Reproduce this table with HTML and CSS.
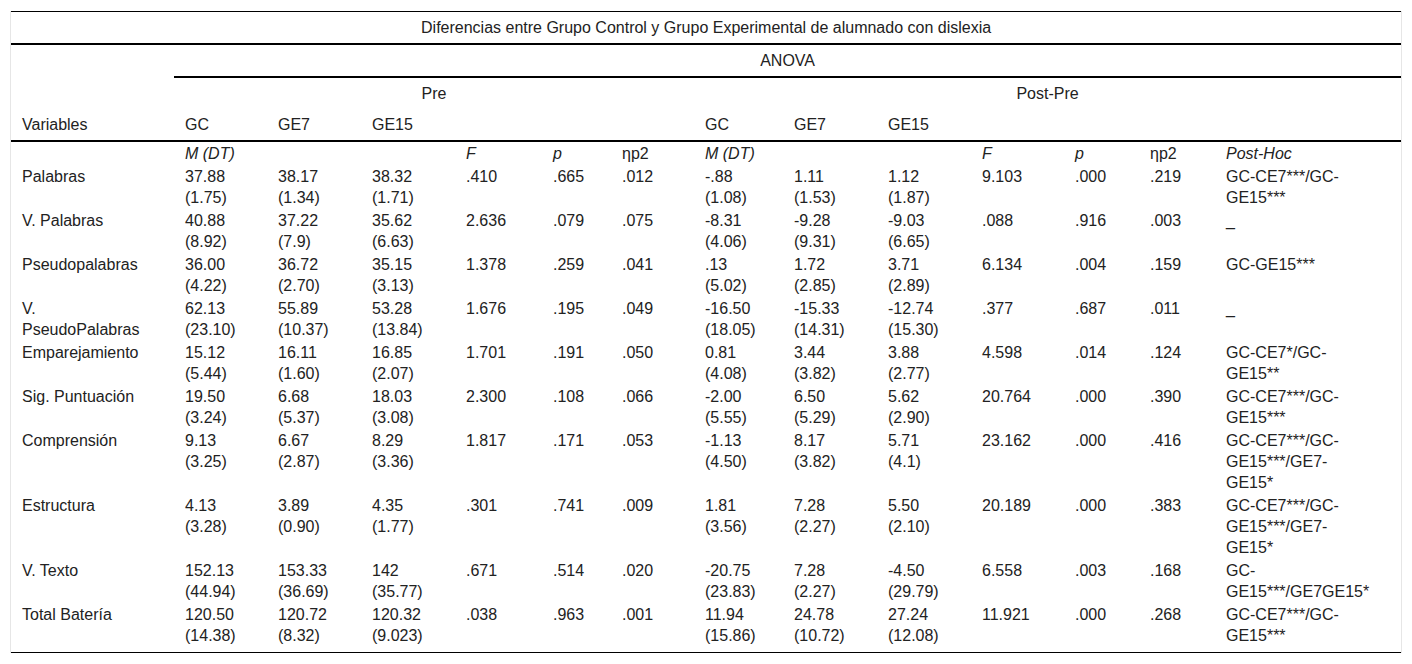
FILE: index.html
```html
<!DOCTYPE html>
<html lang="es">
<head>
<meta charset="utf-8">
<title>Diferencias entre Grupo Control y Grupo Experimental</title>
<link rel="stylesheet" href="styles.css">
</head>
<body>
<div class="frame">
<table class="data">
<colgroup>
<col class="w-var"><col class="w-93"><col class="w-94"><col class="w-94"><col class="w-87"><col class="w-69"><col class="w-83">
<col class="w-89"><col class="w-94"><col class="w-94"><col class="w-93"><col class="w-75"><col class="w-76"><col class="w-ph">
</colgroup>
<thead>
<tr><th class="title" colspan="14">Diferencias entre Grupo Control y Grupo Experimental de alumnado con dislexia</th></tr>
<tr><th class="hd"></th><th class="hd anova" colspan="13">ANOVA</th></tr>
<tr><th class="hd"></th><th class="hd center" colspan="6">Pre</th><th class="hd center" colspan="7">Post-Pre</th></tr>
<tr class="sub">
<th class="hd">Variables</th><th class="hd">GC</th><th class="hd">GE7</th><th class="hd">GE15</th><th class="hd"></th><th class="hd"></th><th class="hd"></th>
<th class="hd">GC</th><th class="hd">GE7</th><th class="hd">GE15</th><th class="hd"></th><th class="hd"></th><th class="hd"></th><th class="hd"></th>
</tr>
</thead>
<tbody>
<tr><td></td><td class="it">M (DT)</td><td></td><td></td><td class="it">F</td><td class="it">p</td><td>ηp2</td><td class="it">M (DT)</td><td></td><td></td><td class="it">F</td><td class="it">p</td><td>ηp2</td><td class="it">Post-Hoc</td></tr>
<tr><td>Palabras</td><td>37.88<br>(1.75)</td><td>38.17<br>(1.34)</td><td>38.32<br>(1.71)</td><td>.410</td><td>.665</td><td>.012</td><td>-.88<br>(1.08)</td><td>1.11<br>(1.53)</td><td>1.12<br>(1.87)</td><td>9.103</td><td>.000</td><td>.219</td><td>GC-CE7***/GC-<br>GE15***</td></tr>
<tr><td>V. Palabras</td><td>40.88<br>(8.92)</td><td>37.22<br>(7.9)</td><td>35.62<br>(6.63)</td><td>2.636</td><td>.079</td><td>.075</td><td>-8.31<br>(4.06)</td><td>-9.28<br>(9.31)</td><td>-9.03<br>(6.65)</td><td>.088</td><td>.916</td><td>.003</td><td>_</td></tr>
<tr><td>Pseudopalabras</td><td>36.00<br>(4.22)</td><td>36.72<br>(2.70)</td><td>35.15<br>(3.13)</td><td>1.378</td><td>.259</td><td>.041</td><td>.13<br>(5.02)</td><td>1.72<br>(2.85)</td><td>3.71<br>(2.89)</td><td>6.134</td><td>.004</td><td>.159</td><td>GC-GE15***</td></tr>
<tr><td>V.<br>PseudoPalabras</td><td>62.13<br>(23.10)</td><td>55.89<br>(10.37)</td><td>53.28<br>(13.84)</td><td>1.676</td><td>.195</td><td>.049</td><td>-16.50<br>(18.05)</td><td>-15.33<br>(14.31)</td><td>-12.74<br>(15.30)</td><td>.377</td><td>.687</td><td>.011</td><td>_</td></tr>
<tr><td>Emparejamiento</td><td>15.12<br>(5.44)</td><td>16.11<br>(1.60)</td><td>16.85<br>(2.07)</td><td>1.701</td><td>.191</td><td>.050</td><td>0.81<br>(4.08)</td><td>3.44<br>(3.82)</td><td>3.88<br>(2.77)</td><td>4.598</td><td>.014</td><td>.124</td><td>GC-CE7*/GC-<br>GE15**</td></tr>
<tr><td>Sig. Puntuación</td><td>19.50<br>(3.24)</td><td>6.68<br>(5.37)</td><td>18.03<br>(3.08)</td><td>2.300</td><td>.108</td><td>.066</td><td>-2.00<br>(5.55)</td><td>6.50<br>(5.29)</td><td>5.62<br>(2.90)</td><td>20.764</td><td>.000</td><td>.390</td><td>GC-CE7***/GC-<br>GE15***</td></tr>
<tr><td>Comprensión</td><td>9.13<br>(3.25)</td><td>6.67<br>(2.87)</td><td>8.29<br>(3.36)</td><td>1.817</td><td>.171</td><td>.053</td><td>-1.13<br>(4.50)</td><td>8.17<br>(3.82)</td><td>5.71<br>(4.1)</td><td>23.162</td><td>.000</td><td>.416</td><td>GC-CE7***/GC-<br>GE15***/GE7-<br>GE15*</td></tr>
<tr><td>Estructura</td><td>4.13<br>(3.28)</td><td>3.89<br>(0.90)</td><td>4.35<br>(1.77)</td><td>.301</td><td>.741</td><td>.009</td><td>1.81<br>(3.56)</td><td>7.28<br>(2.27)</td><td>5.50<br>(2.10)</td><td>20.189</td><td>.000</td><td>.383</td><td>GC-CE7***/GC-<br>GE15***/GE7-<br>GE15*</td></tr>
<tr><td>V. Texto</td><td>152.13<br>(44.94)</td><td>153.33<br>(36.69)</td><td>142<br>(35.77)</td><td>.671</td><td>.514</td><td>.020</td><td>-20.75<br>(23.83)</td><td>7.28<br>(2.27)</td><td>-4.50<br>(29.79)</td><td>6.558</td><td>.003</td><td>.168</td><td>GC-<br>GE15***/GE7GE15*</td></tr>
<tr class="last"><td>Total Batería</td><td>120.50<br>(14.38)</td><td>120.72<br>(8.32)</td><td>120.32<br>(9.023)</td><td>.038</td><td>.963</td><td>.001</td><td>11.94<br>(15.86)</td><td>24.78<br>(10.72)</td><td>27.24<br>(12.08)</td><td>11.921</td><td>.000</td><td>.268</td><td>GC-CE7***/GC-<br>GE15***</td></tr>
</tbody>
</table>
</div>
</body>
</html>
```
FILE: styles.css
```css
html, body {
  margin: 0;
  padding: 0;
  background: #fff;
}
body {
  font-family: "Liberation Sans", Arial, sans-serif;
  font-size: 16px;
  color: #222;
}
.frame {
  margin: 11px 0 0 10px;
  width: 1390px;
  border-left: 1px solid #e6e6e6;
  border-right: 1px solid #e6e6e6;
}
.data {
  width: 1390px;
  table-layout: fixed;
  border-collapse: separate;
  border-spacing: 0;
  line-height: 21px;
}
.w-var { width: 163px; }
.w-93 { width: 93px; }
.w-94 { width: 94px; }
.w-87 { width: 87px; }
.w-69 { width: 69px; }
.w-83 { width: 83px; }
.w-89 { width: 89px; }
.w-75 { width: 75px; }
.w-76 { width: 76px; }
.w-ph { width: 186px; }
th {
  font-weight: normal;
  text-align: left;
}
.title {
  text-align: center;
  padding: 5px 11px;
  border-top: 1px solid #000;
  border-bottom: 2px solid #000;
}
.hd {
  padding: 5px 0 5px 11px;
  white-space: nowrap;
}
.anova {
  text-align: center;
  padding-left: 0;
  border-bottom: 2px solid #000;
}
.center {
  text-align: center;
  padding-left: 0;
}
.sub th {
  border-bottom: 2px solid #000;
}
td {
  padding: 1px 0 1px 11px;
  vertical-align: top;
  white-space: nowrap;
}
.it {
  font-style: italic;
}
.last td {
  padding-bottom: 6px;
  border-bottom: 1px solid #000;
}
```
